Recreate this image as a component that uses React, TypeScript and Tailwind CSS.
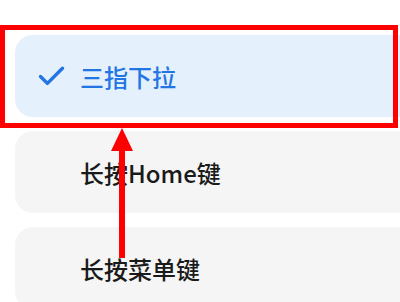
import { Check } from "lucide-react";

const options = [
  { label: "三指下拉", selected: true },
  { label: "长按Home键", selected: false },
  { label: "长按菜单键", selected: false },
];

export default function App() {
  return (
    <div
      className="relative w-[400px] h-[302px] overflow-hidden bg-white"
      style={{ fontFamily: '"Noto Sans CJK SC", "Noto Sans", sans-serif' }}
    >
      <div className="flex flex-col gap-[14px] pt-[35px] pl-[15px] w-[420px]">
        {options.map((opt) => (
          <div
            key={opt.label}
            className={
              opt.selected
                ? "flex items-center h-[82px] rounded-[18px] bg-[#e5f0fd] text-[#2276e3]"
                : "flex items-center h-[82px] rounded-[18px] bg-[#f5f5f5] text-[#1a1a1a]"
            }
          >
            <div className="w-[65px] shrink-0 flex items-center pl-[20px]">
              {opt.selected && <Check className="w-[33px] h-[33px]" strokeWidth={2.5} />}
            </div>
            <span className="text-[24px] leading-none font-medium pt-[2px]">{opt.label}</span>
          </div>
        ))}
      </div>

      {/* highlight box */}
      <div className="absolute left-0 top-[25px] w-[398px] h-[103px] border-[5px] border-[#ff0000]" />

      {/* arrow */}
      <svg className="absolute left-0 top-0" width="400" height="302">
        <polygon points="122,128 111,151 133,151" fill="#ff0000" />
        <rect x="119" y="150" width="6" height="108" fill="#ff0000" />
      </svg>
    </div>
  );
}
